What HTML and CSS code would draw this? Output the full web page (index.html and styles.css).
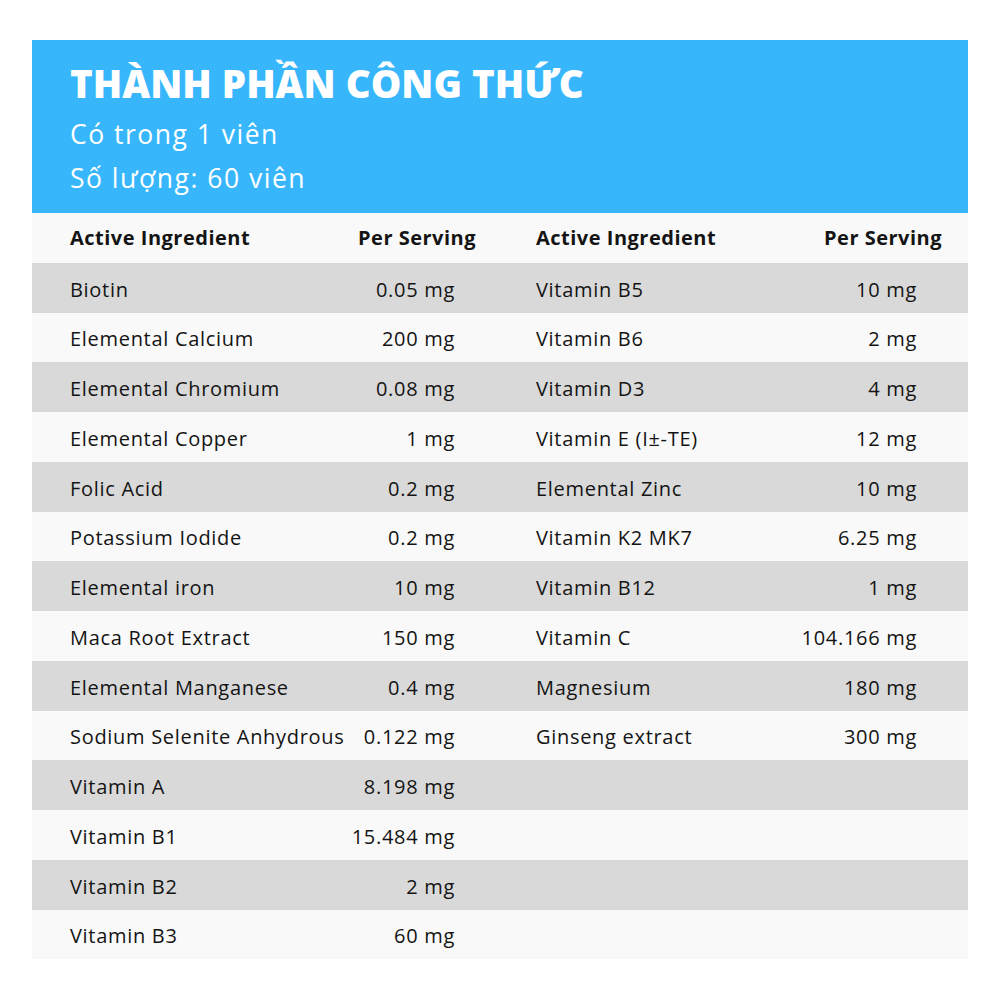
FILE: index.html
```html
<!DOCTYPE html>
<html lang="vi">
<head>
  <meta charset="UTF-8">
  <title>Thành phần công thức</title>
  <link rel="stylesheet" href="styles.css">
</head>
<body>
  <div class="card">
    <header class="banner">
      <h1>THÀNH PHẦN CÔNG THỨC</h1>
      <p>Có trong 1 viên</p>
      <p>Số lượng: 60 viên</p>
    </header>
    <table class="facts">
      <colgroup>
        <col class="c-name"><col class="c-amt"><col class="c-name2"><col class="c-amt2">
      </colgroup>
      <thead>
        <tr>
          <th class="name">Active Ingredient</th>
          <th class="amt">Per Serving</th>
          <th class="name2">Active Ingredient</th>
          <th class="amt2">Per Serving</th>
        </tr>
      </thead>
      <tbody>
        <tr><td class="name">Biotin</td><td class="amt">0.05 mg</td><td class="name2">Vitamin B5</td><td class="amt2">10 mg</td></tr>
        <tr><td class="name">Elemental Calcium</td><td class="amt">200 mg</td><td class="name2">Vitamin B6</td><td class="amt2">2 mg</td></tr>
        <tr><td class="name">Elemental Chromium</td><td class="amt">0.08 mg</td><td class="name2">Vitamin D3</td><td class="amt2">4 mg</td></tr>
        <tr><td class="name">Elemental Copper</td><td class="amt">1 mg</td><td class="name2">Vitamin E (I±-TE)</td><td class="amt2">12 mg</td></tr>
        <tr><td class="name">Folic Acid</td><td class="amt">0.2 mg</td><td class="name2">Elemental Zinc</td><td class="amt2">10 mg</td></tr>
        <tr><td class="name">Potassium Iodide</td><td class="amt">0.2 mg</td><td class="name2">Vitamin K2 MK7</td><td class="amt2">6.25 mg</td></tr>
        <tr><td class="name">Elemental iron</td><td class="amt">10 mg</td><td class="name2">Vitamin B12</td><td class="amt2">1 mg</td></tr>
        <tr><td class="name">Maca Root Extract</td><td class="amt">150 mg</td><td class="name2">Vitamin C</td><td class="amt2">104.166 mg</td></tr>
        <tr><td class="name">Elemental Manganese</td><td class="amt">0.4 mg</td><td class="name2">Magnesium</td><td class="amt2">180 mg</td></tr>
        <tr><td class="name">Sodium Selenite Anhydrous</td><td class="amt">0.122 mg</td><td class="name2">Ginseng extract</td><td class="amt2">300 mg</td></tr>
        <tr><td class="name">Vitamin A</td><td class="amt">8.198 mg</td><td></td><td></td></tr>
        <tr><td class="name">Vitamin B1</td><td class="amt">15.484 mg</td><td></td><td></td></tr>
        <tr><td class="name">Vitamin B2</td><td class="amt">2 mg</td><td></td><td></td></tr>
        <tr><td class="name">Vitamin B3</td><td class="amt">60 mg</td><td></td><td></td></tr>
      </tbody>
    </table>
  </div>
</body>
</html>
```

FILE: styles.css
```css
body { margin: 0; background: #ffffff; font-family: "Open Sans", "Noto Sans", sans-serif; color: #141414; }
.card { width: 936px; margin: 40px 0 0 32px; }

.banner { background: #38b6fc; color: #ffffff; padding: 18px 38px 0; height: 155px; }
.banner h1 { margin: 0 0 4px; font-size: 38.5px; font-weight: 800; line-height: 50px; }
.banner p { margin: 0; font-size: 26.5px; line-height: 44px; font-weight: 400; letter-spacing: 1.5px; }

.facts { width: 936px; border-collapse: collapse; table-layout: fixed; }
.c-name { width: 318px; }
.c-amt { width: 150px; }
.c-name2 { width: 290px; }
.c-amt2 { width: 178px; }

.facts th, .facts td { height: 49.75px; box-sizing: border-box; padding: 3px 0 0; white-space: nowrap; font-size: 20px; letter-spacing: 0.7px; }
.facts th { font-weight: 700; letter-spacing: 0.5px; padding-top: 0; }
.facts thead tr { background: #f9f9f9; }
.facts tbody tr:nth-child(odd) { background: #d9d9d9; }
.facts tbody tr:nth-child(even) { background: #f9f9f9; }

.name { text-align: left; padding-left: 38px !important; }
.name2 { text-align: left; padding-left: 36px !important; }
td.amt { text-align: right; padding-right: 45px !important; }
td.amt2 { text-align: right; padding-right: 51px !important; }
th.amt { text-align: right; padding-right: 24px !important; }
th.amt2 { text-align: right; padding-right: 26px !important; }
```
